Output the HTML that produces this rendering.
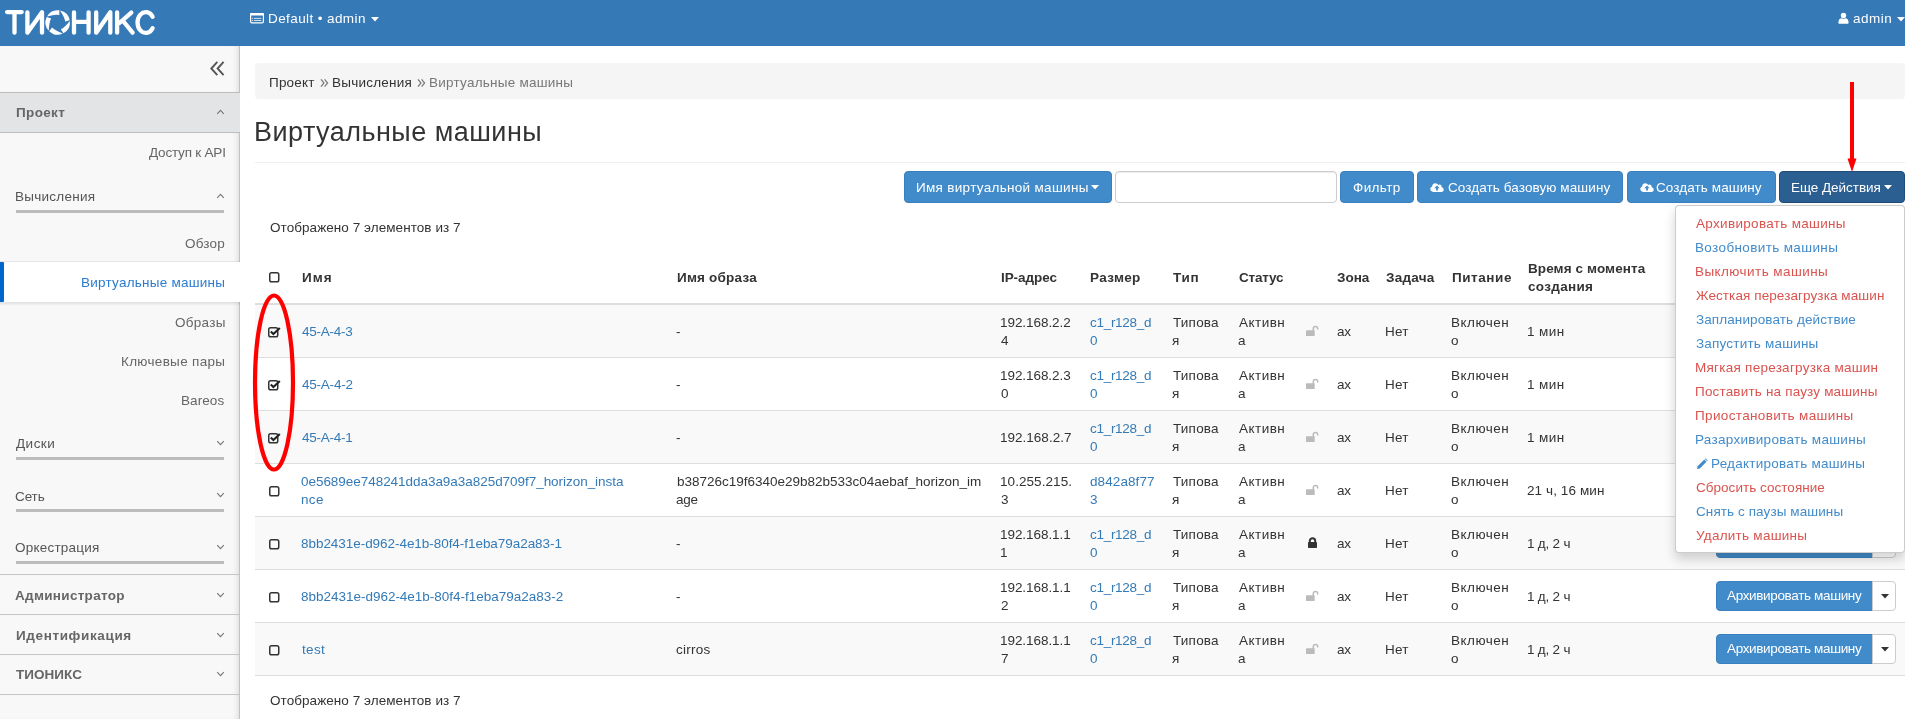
<!DOCTYPE html>
<html><head><meta charset="utf-8"><title>Виртуальные машины</title>
<style>
html,body{margin:0;padding:0;}
body{width:1905px;height:719px;position:relative;overflow:hidden;background:#fff;font-family:"Liberation Sans",sans-serif;}
.t{position:absolute;white-space:nowrap;line-height:20px;will-change:transform;}
.b{position:absolute;}
</style></head><body>
<div class="b" style="left:0px;top:0px;width:1905px;height:46px;background:#3579b7;"></div>
<svg class="b" style="left:0;top:0" width="170" height="46" viewBox="0 0 170 46">
<g fill="none" stroke="#fff" stroke-width="4.3" stroke-linecap="round" stroke-linejoin="round">
<path d="M7.1 12.1H21.7M14.5 12.1V32.7"/>
<path d="M27.4 12.3V32.7L42 12.3V32.7"/>
<path d="M74 12.3V32.7M88.6 12.3V32.7M74 21.9H88.6"/>
<path d="M96.2 12.3V32.7L110.3 12.3V32.7"/>
<path d="M117.1 12.3V32.7M131.3 12.6L119.5 23M123.5 21.5L132.6 32.7"/>
<path d="M152.6 16.8A8.2 10.4 0 1 0 152.6 28.2"/>
</g>
<path fill="#fff" d="M47.03 16.49A12.2 12.2 0 0 1 59.40 10.32L59.28 14.97Q54.97 14.24 47.03 16.49ZM60.03 10.42A12.2 12.2 0 0 1 69.71 20.28L65.26 21.61Q64.61 17.28 60.03 10.42ZM69.81 20.91A12.2 12.2 0 0 1 63.43 33.17L60.79 29.34Q64.70 27.39 69.81 20.91ZM62.86 33.46A12.2 12.2 0 0 1 49.23 31.18L52.05 27.49Q55.11 30.60 62.86 33.46ZM48.78 30.72A12.2 12.2 0 0 1 46.73 17.05L51.12 18.60Q49.10 22.48 48.78 30.72Z"/>
</svg>
<svg class="b" style="left:249px;top:12px" width="16" height="12" viewBox="0 0 16 12">
<rect x="1.6" y="1.6" width="12.8" height="9.2" rx="1.3" fill="none" stroke="#fff" stroke-width="1.2"/>
<rect x="1" y="1" width="14" height="2.6" rx="1" fill="#fff"/>
<path d="M5 6.4H12.3M5 8.5H12.3M3 6.4H4.2M3 8.5H4.2" stroke="#fff" stroke-width="0.9" opacity="0.85"/>
</svg>
<div id="t0" class="t" style="left:268.17px;top:8.7px;font-size:13.5px;color:#fff;font-weight:400;letter-spacing:0.404px;">Default &bull; admin</div>
<svg class="b" style="left:371px;top:17px" width="8" height="5"><path d="M0 0H8L4 4.5Z" fill="#fff"/></svg>
<svg class="b" style="left:1838px;top:12px" width="12" height="13" viewBox="0 0 12 13.6" preserveAspectRatio="none">
<circle cx="5.5" cy="3.6" r="2.7" fill="#fff"/>
<path d="M0.4 11.3C0.4 8.4 1.6 6.9 3.2 6.6C4.4 7.3 6.6 7.3 7.8 6.6C9.4 6.9 10.6 8.4 10.6 11.3C10.6 12 10.2 12.4 9.5 12.4H1.5C0.8 12.4 0.4 12 0.4 11.3Z" fill="#fff"/>
</svg>
<div id="t1" class="t" style="left:1853.31px;top:8.8px;font-size:13.5px;color:#fff;font-weight:400;letter-spacing:0.505px;">admin</div>
<svg class="b" style="left:1897px;top:17px" width="8" height="5"><path d="M0 0H8L4 4.5Z" fill="#fff"/></svg>
<div class="b" style="left:0px;top:46px;width:240px;height:673px;background:#f8f8f8;box-shadow: inset -6px 0 6px -4px rgba(0,0,0,0.13)"></div>
<div class="b" style="left:239px;top:46px;width:1px;height:673px;background:#c2c2c2;"></div>
<svg class="b" style="left:209px;top:60px" width="17" height="17" viewBox="0 0 17 17">
<path d="M8.3 1.8L2.3 8.5L8.3 15.2M14.6 1.8L8.6 8.5L14.6 15.2" fill="none" stroke="#555" stroke-width="1.9"/>
</svg>
<div class="b" style="left:0px;top:92px;width:240px;height:1px;background:#bdbdbd;"></div>
<div class="b" style="left:0px;top:93px;width:240px;height:39px;background:#e3e4e6;"></div>
<div class="b" style="left:0px;top:132px;width:240px;height:1px;background:#bdbdbd;"></div>
<div id="t2" class="t" style="left:15.53px;top:103px;font-size:13.5px;color:#666;font-weight:700;letter-spacing:0.355px;">Проект</div>
<svg class="b" style="left:216px;top:109px" width="9" height="6" viewBox="0 0 9 6"><path d="M1.2 4.8L4.5 1.4L7.8 4.8" fill="none" stroke="#777" stroke-width="1.15"/></svg>
<div id="t3" class="t" style="left:148.59px;top:143px;font-size:13.5px;color:#666;font-weight:400;letter-spacing:-0.200px;">Доступ к API</div>
<div id="t4" class="t" style="left:14.87px;top:187.4px;font-size:13.5px;color:#555;font-weight:400;letter-spacing:0.264px;">Вычисления</div>
<svg class="b" style="left:216px;top:193px" width="9" height="6" viewBox="0 0 9 6"><path d="M1.2 4.8L4.5 1.4L7.8 4.8" fill="none" stroke="#777" stroke-width="1.15"/></svg>
<div class="b" style="left:16px;top:210px;width:208px;height:3px;background:#bcbcbc;"></div>
<div id="t5" class="t" style="left:185.35px;top:234px;font-size:13.5px;color:#666;font-weight:400;letter-spacing:0.204px;">Обзор</div>
<div class="b" style="left:0px;top:261px;width:240px;height:1px;background:rgba(0,0,0,0.07);"></div>
<div class="b" style="left:0px;top:302px;width:240px;height:4px;background:linear-gradient(rgba(0,0,0,0.10),rgba(0,0,0,0));"></div>
<div class="b" style="left:0px;top:262px;width:240px;height:40px;background:#fff;"></div>
<div class="b" style="left:0px;top:262px;width:4px;height:40px;background:#0066cc;border-radius:0 1px 1px 0"></div>
<div id="t6" class="t" style="left:80.69px;top:273px;font-size:13.5px;color:#2c7bcf;font-weight:400;letter-spacing:0.241px;">Виртуальные машины</div>
<div id="t7" class="t" style="left:174.79px;top:313px;font-size:13.5px;color:#666;font-weight:400;letter-spacing:0.283px;">Образы</div>
<div id="t8" class="t" style="left:120.69px;top:352px;font-size:13.5px;color:#666;font-weight:400;letter-spacing:0.307px;">Ключевые пары</div>
<div id="t9" class="t" style="left:181.23px;top:391px;font-size:13.5px;color:#666;font-weight:400;letter-spacing:0.083px;">Bareos</div>
<div id="t10" class="t" style="left:15.90px;top:434px;font-size:13.5px;color:#555;font-weight:400;letter-spacing:0.480px;">Диски</div>
<svg class="b" style="left:216px;top:440px" width="9" height="6" viewBox="0 0 9 6"><path d="M1.2 1.2L4.5 4.6L7.8 1.2" fill="none" stroke="#777" stroke-width="1.15"/></svg>
<div class="b" style="left:16px;top:457px;width:208px;height:3px;background:#bcbcbc;"></div>
<div id="t11" class="t" style="left:15.15px;top:486.5px;font-size:13.5px;color:#555;font-weight:400;letter-spacing:-0.121px;">Сеть</div>
<svg class="b" style="left:216px;top:492px" width="9" height="6" viewBox="0 0 9 6"><path d="M1.2 1.2L4.5 4.6L7.8 1.2" fill="none" stroke="#777" stroke-width="1.15"/></svg>
<div class="b" style="left:16px;top:509px;width:208px;height:3px;background:#bcbcbc;"></div>
<div id="t12" class="t" style="left:15.20px;top:538px;font-size:13.5px;color:#555;font-weight:400;letter-spacing:0.215px;">Оркестрация</div>
<svg class="b" style="left:216px;top:544px" width="9" height="6" viewBox="0 0 9 6"><path d="M1.2 1.2L4.5 4.6L7.8 1.2" fill="none" stroke="#777" stroke-width="1.15"/></svg>
<div class="b" style="left:16px;top:561px;width:208px;height:3px;background:#bcbcbc;"></div>
<div class="b" style="left:0px;top:574px;width:240px;height:1px;background:#c4c4c4;"></div>
<div id="t13" class="t" style="left:15.39px;top:586px;font-size:13.5px;color:#666;font-weight:700;letter-spacing:0.305px;">Администратор</div>
<svg class="b" style="left:216px;top:592px" width="9" height="6" viewBox="0 0 9 6"><path d="M1.2 1.2L4.5 4.6L7.8 1.2" fill="none" stroke="#777" stroke-width="1.15"/></svg>
<div class="b" style="left:0px;top:614px;width:240px;height:1px;background:#c4c4c4;"></div>
<div id="t14" class="t" style="left:15.55px;top:626px;font-size:13.5px;color:#666;font-weight:700;letter-spacing:0.624px;">Идентификация</div>
<svg class="b" style="left:216px;top:632px" width="9" height="6" viewBox="0 0 9 6"><path d="M1.2 1.2L4.5 4.6L7.8 1.2" fill="none" stroke="#777" stroke-width="1.15"/></svg>
<div class="b" style="left:0px;top:654px;width:240px;height:1px;background:#c4c4c4;"></div>
<div id="t15" class="t" style="left:15.84px;top:665px;font-size:13.5px;color:#666;font-weight:700;letter-spacing:0.035px;">ТИОНИКС</div>
<svg class="b" style="left:216px;top:671px" width="9" height="6" viewBox="0 0 9 6"><path d="M1.2 1.2L4.5 4.6L7.8 1.2" fill="none" stroke="#777" stroke-width="1.15"/></svg>
<div class="b" style="left:0px;top:694px;width:240px;height:1px;background:#c4c4c4;"></div>
<div class="b" style="left:255px;top:63px;width:1650px;height:36px;background:#f5f5f5;border-radius:4px"></div>
<div id="t16" class="t" style="left:269.39px;top:73px;font-size:13.5px;color:#333;font-weight:400;letter-spacing:0.199px;">Проект</div>
<svg class="b" style="left:320px;top:78px" width="9" height="10" viewBox="0 0 9 10"><path d="M1 1.3L4 5L1 8.7M4.6 1.3L7.6 5L4.6 8.7" fill="none" stroke="#777" stroke-width="1.2"/></svg>
<div id="t17" class="t" style="left:332.38px;top:73px;font-size:13.5px;color:#333;font-weight:400;letter-spacing:0.239px;">Вычисления</div>
<svg class="b" style="left:416.5px;top:78px" width="9" height="10" viewBox="0 0 9 10"><path d="M1 1.3L4 5L1 8.7M4.6 1.3L7.6 5L4.6 8.7" fill="none" stroke="#777" stroke-width="1.2"/></svg>
<div id="t18" class="t" style="left:428.89px;top:73px;font-size:13.5px;color:#777;font-weight:400;letter-spacing:0.241px;">Виртуальные машины</div>
<div id="t19" class="t" style="left:254.29px;top:122.19999999999999px;font-size:27px;color:#333;font-weight:400;letter-spacing:0.469px;">Виртуальные машины</div>
<div class="b" style="left:255px;top:162px;width:1650px;height:1px;background:#eee;"></div>
<div class="b" style="left:904px;top:171px;width:208px;height:32px;background:#428bca;border-radius:4px;box-sizing:border-box;border:1px solid #3a7fbd"></div>
<div id="t20" class="t" style="left:915.89px;top:178.3px;font-size:13.5px;color:#fff;font-weight:400;letter-spacing:0.308px;">Имя виртуальной машины</div>
<svg class="b" style="left:1091px;top:185px" width="8" height="5"><path d="M0 0H8L4 4.5Z" fill="#fff"/></svg>
<div class="b" style="left:1115px;top:171px;width:222px;height:32px;background:#fff;border-radius:4px;box-sizing:border-box;border:1px solid #ccc;box-shadow:inset 0 1px 1px rgba(0,0,0,.075)"></div>
<div class="b" style="left:1340px;top:171px;width:74px;height:32px;background:#428bca;border-radius:4px;box-sizing:border-box;border:1px solid #3a7fbd"></div>
<div id="t21" class="t" style="left:1353.08px;top:178.3px;font-size:13.5px;color:#fff;font-weight:400;letter-spacing:0.368px;">Фильтр</div>
<div class="b" style="left:1417px;top:171px;width:206px;height:32px;background:#428bca;border-radius:4px;box-sizing:border-box;border:1px solid #3a7fbd"></div>
<svg class="b" style="left:1430.2px;top:181.6px" width="14" height="10.3" viewBox="0 0 15 11">
<path d="M3.4 10.6C1.6 10.6 0.3 9.3 0.3 7.6C0.3 6.2 1.2 5.1 2.4 4.7C2.4 4.6 2.4 4.5 2.4 4.4C2.4 2.6 3.9 1.2 5.7 1.2C7 1.2 8.2 2 8.7 3.1C9.1 2.8 9.6 2.6 10.1 2.6C11.4 2.6 12.4 3.6 12.4 4.9C12.4 5.1 12.4 5.3 12.3 5.4C13.7 5.8 14.7 7 14.7 8.4C14.7 9.6 13.7 10.6 12.4 10.6Z" fill="#fff"/>
<path d="M7.5 3.8L4.6 6.7H6.5V9.2H8.5V6.7H10.4Z" fill="#428bca"/>
</svg>
<div id="t22" class="t" style="left:1447.70px;top:178.3px;font-size:13.5px;color:#fff;font-weight:400;letter-spacing:0.092px;">Создать базовую машину</div>
<div class="b" style="left:1627px;top:171px;width:149px;height:32px;background:#428bca;border-radius:4px;box-sizing:border-box;border:1px solid #3a7fbd"></div>
<svg class="b" style="left:1639.5px;top:181.6px" width="14" height="10.3" viewBox="0 0 15 11">
<path d="M3.4 10.6C1.6 10.6 0.3 9.3 0.3 7.6C0.3 6.2 1.2 5.1 2.4 4.7C2.4 4.6 2.4 4.5 2.4 4.4C2.4 2.6 3.9 1.2 5.7 1.2C7 1.2 8.2 2 8.7 3.1C9.1 2.8 9.6 2.6 10.1 2.6C11.4 2.6 12.4 3.6 12.4 4.9C12.4 5.1 12.4 5.3 12.3 5.4C13.7 5.8 14.7 7 14.7 8.4C14.7 9.6 13.7 10.6 12.4 10.6Z" fill="#fff"/>
<path d="M7.5 3.8L4.6 6.7H6.5V9.2H8.5V6.7H10.4Z" fill="#428bca"/>
</svg>
<div id="t23" class="t" style="left:1656.20px;top:178.3px;font-size:13.5px;color:#fff;font-weight:400;letter-spacing:0.090px;">Создать машину</div>
<div class="b" style="left:1779px;top:171px;width:126px;height:32px;background:#2b5f91;border-radius:4px;box-sizing:border-box;border:1px solid #204d79"></div>
<div id="t24" class="t" style="left:1790.89px;top:178.3px;font-size:13.5px;color:#fff;font-weight:400;letter-spacing:-0.050px;">Еще Действия</div>
<svg class="b" style="left:1884px;top:185px" width="8" height="5"><path d="M0 0H8L4 4.5Z" fill="#fff"/></svg>
<div id="t25" class="t" style="left:269.70px;top:217.7px;font-size:13.5px;color:#333;font-weight:400;letter-spacing:0.061px;">Отображено 7 элементов из 7</div>
<svg class="b" style="left:268px;top:271px" width="13" height="13" viewBox="0 0 13 13">
<rect x="1.75" y="1.75" width="9" height="9" rx="1.8" fill="none" stroke="#333" stroke-width="1.5"/>
</svg>
<div id="t26" class="t" style="left:301.99px;top:268px;font-size:13.5px;color:#333;font-weight:700;letter-spacing:1.068px;">Имя</div>
<div id="t27" class="t" style="left:676.60px;top:268px;font-size:13.5px;color:#333;font-weight:700;letter-spacing:0.198px;">Имя образа</div>
<div id="t28" class="t" style="left:1000.80px;top:268px;font-size:13.5px;color:#333;font-weight:700;letter-spacing:-0.073px;">IP-адрес</div>
<div id="t29" class="t" style="left:1089.86px;top:268px;font-size:13.5px;color:#333;font-weight:700;letter-spacing:0.334px;">Размер</div>
<div id="t30" class="t" style="left:1173.10px;top:268px;font-size:13.5px;color:#333;font-weight:700;letter-spacing:0.675px;">Тип</div>
<div id="t31" class="t" style="left:1238.80px;top:268px;font-size:13.5px;color:#333;font-weight:700;letter-spacing:-0.186px;">Статус</div>
<div id="t32" class="t" style="left:1336.89px;top:268px;font-size:13.5px;color:#333;font-weight:700;letter-spacing:-0.036px;">Зона</div>
<div id="t33" class="t" style="left:1385.84px;top:268px;font-size:13.5px;color:#333;font-weight:700;letter-spacing:0.253px;">Задача</div>
<div id="t34" class="t" style="left:1451.86px;top:268px;font-size:13.5px;color:#333;font-weight:700;letter-spacing:0.559px;">Питание</div>
<div id="t35" class="t" style="left:1527.80px;top:259px;font-size:13.5px;color:#333;font-weight:700;letter-spacing:0.098px;">Время с момента</div>
<div id="t36" class="t" style="left:1528.20px;top:277px;font-size:13.5px;color:#333;font-weight:700;letter-spacing:0.325px;">создания</div>
<div class="b" style="left:255px;top:303px;width:1650px;height:2px;background:#ddd;"></div>
<div class="b" style="left:255px;top:305px;width:1650px;height:52px;background:#f9f9f9;"></div>
<div class="b" style="left:255px;top:357px;width:1650px;height:1px;background:#ddd;"></div>
<svg class="b" style="left:267.3px;top:325.8px" width="15" height="13" viewBox="0 0 15 13">
<rect x="1.75" y="1.75" width="9" height="9" rx="1.8" fill="none" stroke="#333" stroke-width="1.5"/>
<path d="M3.8 5.4L6.4 8L12.8 1.9" fill="none" stroke="#222" stroke-width="2.1"/>
</svg>
<div id="t37" class="t" style="left:301.65px;top:322px;font-size:13.5px;color:#337ab7;font-weight:400;letter-spacing:-0.238px;">45-A-4-3</div>
<div id="t38" class="t" style="left:676.30px;top:322px;font-size:13.5px;color:#333;font-weight:400;letter-spacing:0.053px;">-</div>
<div id="t39" class="t" style="left:1000.47px;top:313px;font-size:13.5px;color:#333;font-weight:400;letter-spacing:-0.058px;">192.168.2.2</div>
<div id="t40" class="t" style="left:1001.13px;top:331px;font-size:13.5px;color:#333;font-weight:400;letter-spacing:0.053px;">4</div>
<div id="t41" class="t" style="left:1089.80px;top:313px;font-size:13.5px;color:#337ab7;font-weight:400;letter-spacing:-0.287px;">c1_r128_d</div>
<div id="t42" class="t" style="left:1089.87px;top:331px;font-size:13.5px;color:#337ab7;font-weight:400;letter-spacing:0.053px;">0</div>
<div id="t43" class="t" style="left:1172.65px;top:313px;font-size:13.5px;color:#333;font-weight:400;letter-spacing:0.212px;">Типова</div>
<div id="t44" class="t" style="left:1172.46px;top:331px;font-size:13.5px;color:#333;font-weight:400;letter-spacing:0.053px;">я</div>
<div id="t45" class="t" style="left:1238.72px;top:313px;font-size:13.5px;color:#333;font-weight:400;letter-spacing:0.477px;">Активн</div>
<div id="t46" class="t" style="left:1238.25px;top:331px;font-size:13.5px;color:#333;font-weight:400;letter-spacing:0.053px;">а</div>
<svg class="b" style="left:1305px;top:325px" width="14" height="12" viewBox="0 0 14 12">
<path d="M8.3 6V3.8C8.3 2.5 9.3 1.6 10.5 1.6C11.7 1.6 12.7 2.5 12.7 3.8V4.6" fill="none" stroke="#bbb" stroke-width="1.5"/>
<rect x="1" y="5.3" width="8.7" height="5.8" rx="0.6" fill="#bbb"/>
</svg>
<div id="t47" class="t" style="left:1336.91px;top:322px;font-size:13.5px;color:#333;font-weight:400;letter-spacing:-0.227px;">ax</div>
<div id="t48" class="t" style="left:1384.87px;top:322px;font-size:13.5px;color:#333;font-weight:400;letter-spacing:0.197px;">Нет</div>
<div id="t49" class="t" style="left:1450.87px;top:313px;font-size:13.5px;color:#333;font-weight:400;letter-spacing:0.492px;">Включен</div>
<div id="t50" class="t" style="left:1451.32px;top:331px;font-size:13.5px;color:#333;font-weight:400;letter-spacing:0.053px;">о</div>
<div id="t51" class="t" style="left:1526.97px;top:322px;font-size:13.5px;color:#333;font-weight:400;letter-spacing:0.395px;">1 мин</div>
<div class="b" style="left:255px;top:410px;width:1650px;height:1px;background:#ddd;"></div>
<svg class="b" style="left:267.3px;top:378.8px" width="15" height="13" viewBox="0 0 15 13">
<rect x="1.75" y="1.75" width="9" height="9" rx="1.8" fill="none" stroke="#333" stroke-width="1.5"/>
<path d="M3.8 5.4L6.4 8L12.8 1.9" fill="none" stroke="#222" stroke-width="2.1"/>
</svg>
<div id="t52" class="t" style="left:301.65px;top:375px;font-size:13.5px;color:#337ab7;font-weight:400;letter-spacing:-0.224px;">45-A-4-2</div>
<div id="t53" class="t" style="left:676.30px;top:375px;font-size:13.5px;color:#333;font-weight:400;letter-spacing:0.053px;">-</div>
<div id="t54" class="t" style="left:1000.47px;top:366px;font-size:13.5px;color:#333;font-weight:400;letter-spacing:-0.062px;">192.168.2.3</div>
<div id="t55" class="t" style="left:1000.86px;top:384px;font-size:13.5px;color:#333;font-weight:400;letter-spacing:0.053px;">0</div>
<div id="t56" class="t" style="left:1089.80px;top:366px;font-size:13.5px;color:#337ab7;font-weight:400;letter-spacing:-0.287px;">c1_r128_d</div>
<div id="t57" class="t" style="left:1089.88px;top:384px;font-size:13.5px;color:#337ab7;font-weight:400;letter-spacing:0.053px;">0</div>
<div id="t58" class="t" style="left:1172.65px;top:366px;font-size:13.5px;color:#333;font-weight:400;letter-spacing:0.213px;">Типова</div>
<div id="t59" class="t" style="left:1172.46px;top:384px;font-size:13.5px;color:#333;font-weight:400;letter-spacing:0.053px;">я</div>
<div id="t60" class="t" style="left:1238.72px;top:366px;font-size:13.5px;color:#333;font-weight:400;letter-spacing:0.477px;">Активн</div>
<div id="t61" class="t" style="left:1238.25px;top:384px;font-size:13.5px;color:#333;font-weight:400;letter-spacing:0.053px;">а</div>
<svg class="b" style="left:1305px;top:378px" width="14" height="12" viewBox="0 0 14 12">
<path d="M8.3 6V3.8C8.3 2.5 9.3 1.6 10.5 1.6C11.7 1.6 12.7 2.5 12.7 3.8V4.6" fill="none" stroke="#bbb" stroke-width="1.5"/>
<rect x="1" y="5.3" width="8.7" height="5.8" rx="0.6" fill="#bbb"/>
</svg>
<div id="t62" class="t" style="left:1336.91px;top:375px;font-size:13.5px;color:#333;font-weight:400;letter-spacing:-0.223px;">ax</div>
<div id="t63" class="t" style="left:1384.88px;top:375px;font-size:13.5px;color:#333;font-weight:400;letter-spacing:0.194px;">Нет</div>
<div id="t64" class="t" style="left:1450.88px;top:366px;font-size:13.5px;color:#333;font-weight:400;letter-spacing:0.491px;">Включен</div>
<div id="t65" class="t" style="left:1451.31px;top:384px;font-size:13.5px;color:#333;font-weight:400;letter-spacing:0.053px;">о</div>
<div id="t66" class="t" style="left:1526.97px;top:375px;font-size:13.5px;color:#333;font-weight:400;letter-spacing:0.395px;">1 мин</div>
<div class="b" style="left:255px;top:411px;width:1650px;height:52px;background:#f9f9f9;"></div>
<div class="b" style="left:255px;top:463px;width:1650px;height:1px;background:#ddd;"></div>
<svg class="b" style="left:267.3px;top:431.8px" width="15" height="13" viewBox="0 0 15 13">
<rect x="1.75" y="1.75" width="9" height="9" rx="1.8" fill="none" stroke="#333" stroke-width="1.5"/>
<path d="M3.8 5.4L6.4 8L12.8 1.9" fill="none" stroke="#222" stroke-width="2.1"/>
</svg>
<div id="t67" class="t" style="left:301.65px;top:428px;font-size:13.5px;color:#337ab7;font-weight:400;letter-spacing:-0.236px;">45-A-4-1</div>
<div id="t68" class="t" style="left:676.30px;top:428px;font-size:13.5px;color:#333;font-weight:400;letter-spacing:0.053px;">-</div>
<div id="t69" class="t" style="left:1000.47px;top:428px;font-size:13.5px;color:#333;font-weight:400;letter-spacing:0.013px;">192.168.2.7</div>
<div id="t70" class="t" style="left:1089.80px;top:419px;font-size:13.5px;color:#337ab7;font-weight:400;letter-spacing:-0.287px;">c1_r128_d</div>
<div id="t71" class="t" style="left:1089.87px;top:437px;font-size:13.5px;color:#337ab7;font-weight:400;letter-spacing:0.053px;">0</div>
<div id="t72" class="t" style="left:1172.65px;top:419px;font-size:13.5px;color:#333;font-weight:400;letter-spacing:0.212px;">Типова</div>
<div id="t73" class="t" style="left:1172.46px;top:437px;font-size:13.5px;color:#333;font-weight:400;letter-spacing:0.053px;">я</div>
<div id="t74" class="t" style="left:1238.72px;top:419px;font-size:13.5px;color:#333;font-weight:400;letter-spacing:0.477px;">Активн</div>
<div id="t75" class="t" style="left:1238.25px;top:437px;font-size:13.5px;color:#333;font-weight:400;letter-spacing:0.053px;">а</div>
<svg class="b" style="left:1305px;top:431px" width="14" height="12" viewBox="0 0 14 12">
<path d="M8.3 6V3.8C8.3 2.5 9.3 1.6 10.5 1.6C11.7 1.6 12.7 2.5 12.7 3.8V4.6" fill="none" stroke="#bbb" stroke-width="1.5"/>
<rect x="1" y="5.3" width="8.7" height="5.8" rx="0.6" fill="#bbb"/>
</svg>
<div id="t76" class="t" style="left:1336.91px;top:428px;font-size:13.5px;color:#333;font-weight:400;letter-spacing:-0.227px;">ax</div>
<div id="t77" class="t" style="left:1384.87px;top:428px;font-size:13.5px;color:#333;font-weight:400;letter-spacing:0.197px;">Нет</div>
<div id="t78" class="t" style="left:1450.87px;top:419px;font-size:13.5px;color:#333;font-weight:400;letter-spacing:0.492px;">Включен</div>
<div id="t79" class="t" style="left:1451.32px;top:437px;font-size:13.5px;color:#333;font-weight:400;letter-spacing:0.053px;">о</div>
<div id="t80" class="t" style="left:1526.97px;top:428px;font-size:13.5px;color:#333;font-weight:400;letter-spacing:0.395px;">1 мин</div>
<div class="b" style="left:255px;top:516px;width:1650px;height:1px;background:#ddd;"></div>
<svg class="b" style="left:268.4px;top:485px" width="13" height="13" viewBox="0 0 13 13">
<rect x="1.75" y="1.75" width="9" height="9" rx="1.8" fill="none" stroke="#333" stroke-width="1.5"/>
</svg>
<div id="t81" class="t" style="left:301.36px;top:472px;font-size:13.5px;color:#337ab7;font-weight:400;letter-spacing:-0.041px;">0e5689ee748241dda3a9a3a825d709f7_horizon_insta</div>
<div id="t82" class="t" style="left:301.40px;top:490px;font-size:13.5px;color:#337ab7;font-weight:400;letter-spacing:0.316px;">nce</div>
<div id="t83" class="t" style="left:676.53px;top:472px;font-size:13.5px;color:#333;font-weight:400;letter-spacing:-0.010px;">b38726c19f6340e29b82b533c04aebaf_horizon_im</div>
<div id="t84" class="t" style="left:676.25px;top:490px;font-size:13.5px;color:#333;font-weight:400;letter-spacing:-0.274px;">age</div>
<div id="t85" class="t" style="left:1000.47px;top:472px;font-size:13.5px;color:#333;font-weight:400;letter-spacing:0.067px;">10.255.215.</div>
<div id="t86" class="t" style="left:1000.56px;top:490px;font-size:13.5px;color:#333;font-weight:400;letter-spacing:0.053px;">3</div>
<div id="t87" class="t" style="left:1089.82px;top:472px;font-size:13.5px;color:#337ab7;font-weight:400;letter-spacing:0.086px;">d842a8f77</div>
<div id="t88" class="t" style="left:1089.57px;top:490px;font-size:13.5px;color:#337ab7;font-weight:400;letter-spacing:0.053px;">3</div>
<div id="t89" class="t" style="left:1172.65px;top:472px;font-size:13.5px;color:#333;font-weight:400;letter-spacing:0.213px;">Типова</div>
<div id="t90" class="t" style="left:1172.46px;top:490px;font-size:13.5px;color:#333;font-weight:400;letter-spacing:0.053px;">я</div>
<div id="t91" class="t" style="left:1238.72px;top:472px;font-size:13.5px;color:#333;font-weight:400;letter-spacing:0.477px;">Активн</div>
<div id="t92" class="t" style="left:1238.25px;top:490px;font-size:13.5px;color:#333;font-weight:400;letter-spacing:0.053px;">а</div>
<svg class="b" style="left:1305px;top:484px" width="14" height="12" viewBox="0 0 14 12">
<path d="M8.3 6V3.8C8.3 2.5 9.3 1.6 10.5 1.6C11.7 1.6 12.7 2.5 12.7 3.8V4.6" fill="none" stroke="#bbb" stroke-width="1.5"/>
<rect x="1" y="5.3" width="8.7" height="5.8" rx="0.6" fill="#bbb"/>
</svg>
<div id="t93" class="t" style="left:1336.91px;top:481px;font-size:13.5px;color:#333;font-weight:400;letter-spacing:-0.223px;">ax</div>
<div id="t94" class="t" style="left:1384.88px;top:481px;font-size:13.5px;color:#333;font-weight:400;letter-spacing:0.194px;">Нет</div>
<div id="t95" class="t" style="left:1450.88px;top:472px;font-size:13.5px;color:#333;font-weight:400;letter-spacing:0.491px;">Включен</div>
<div id="t96" class="t" style="left:1451.31px;top:490px;font-size:13.5px;color:#333;font-weight:400;letter-spacing:0.053px;">о</div>
<div id="t97" class="t" style="left:1527.19px;top:481px;font-size:13.5px;color:#333;font-weight:400;letter-spacing:0.090px;">21 ч, 16 мин</div>
<div class="b" style="left:255px;top:517px;width:1650px;height:52px;background:#f9f9f9;"></div>
<div class="b" style="left:255px;top:569px;width:1650px;height:1px;background:#ddd;"></div>
<svg class="b" style="left:268.4px;top:538px" width="13" height="13" viewBox="0 0 13 13">
<rect x="1.75" y="1.75" width="9" height="9" rx="1.8" fill="none" stroke="#333" stroke-width="1.5"/>
</svg>
<div id="t98" class="t" style="left:301.25px;top:534px;font-size:13.5px;color:#337ab7;font-weight:400;letter-spacing:-0.047px;">8bb2431e-d962-4e1b-80f4-f1eba79a2a83-1</div>
<div id="t99" class="t" style="left:676.30px;top:534px;font-size:13.5px;color:#333;font-weight:400;letter-spacing:0.053px;">-</div>
<div id="t100" class="t" style="left:1000.47px;top:525px;font-size:13.5px;color:#333;font-weight:400;letter-spacing:-0.060px;">192.168.1.1</div>
<div id="t101" class="t" style="left:1000.47px;top:543px;font-size:13.5px;color:#333;font-weight:400;letter-spacing:0.053px;">1</div>
<div id="t102" class="t" style="left:1089.80px;top:525px;font-size:13.5px;color:#337ab7;font-weight:400;letter-spacing:-0.287px;">c1_r128_d</div>
<div id="t103" class="t" style="left:1089.87px;top:543px;font-size:13.5px;color:#337ab7;font-weight:400;letter-spacing:0.053px;">0</div>
<div id="t104" class="t" style="left:1172.65px;top:525px;font-size:13.5px;color:#333;font-weight:400;letter-spacing:0.212px;">Типова</div>
<div id="t105" class="t" style="left:1172.46px;top:543px;font-size:13.5px;color:#333;font-weight:400;letter-spacing:0.053px;">я</div>
<div id="t106" class="t" style="left:1238.72px;top:525px;font-size:13.5px;color:#333;font-weight:400;letter-spacing:0.477px;">Активн</div>
<div id="t107" class="t" style="left:1238.25px;top:543px;font-size:13.5px;color:#333;font-weight:400;letter-spacing:0.053px;">а</div>
<svg class="b" style="left:1307px;top:537px" width="11" height="12" viewBox="0 0 11 12">
<path d="M2.8 5.2V3.9C2.8 2.3 4 1.2 5.5 1.2C7 1.2 8.2 2.3 8.2 3.9V5.2" fill="none" stroke="#333" stroke-width="2"/>
<rect x="1" y="5" width="9" height="6" rx="0.8" fill="#333"/>
</svg>
<div id="t108" class="t" style="left:1336.91px;top:534px;font-size:13.5px;color:#333;font-weight:400;letter-spacing:-0.227px;">ax</div>
<div id="t109" class="t" style="left:1384.87px;top:534px;font-size:13.5px;color:#333;font-weight:400;letter-spacing:0.197px;">Нет</div>
<div id="t110" class="t" style="left:1450.87px;top:525px;font-size:13.5px;color:#333;font-weight:400;letter-spacing:0.492px;">Включен</div>
<div id="t111" class="t" style="left:1451.32px;top:543px;font-size:13.5px;color:#333;font-weight:400;letter-spacing:0.053px;">о</div>
<div id="t112" class="t" style="left:1526.97px;top:534px;font-size:13.5px;color:#333;font-weight:400;letter-spacing:-0.217px;">1 д, 2 ч</div>
<div class="b" style="left:1716px;top:528px;width:157px;height:30px;background:#428bca;border-radius:4px 0 0 4px;box-sizing:border-box;border:1px solid #3a7fbd"></div>
<div id="t113" class="t" style="left:1727.70px;top:533px;font-size:13.5px;color:#fff;font-weight:400;letter-spacing:-0.378px;">Архивировать машину</div>
<div class="b" style="left:1872px;top:528px;width:24px;height:30px;background:#fff;border-radius:0 4px 4px 0;box-sizing:border-box;border:1px solid #ccc"></div>
<svg class="b" style="left:1880.5px;top:541px" width="8" height="5"><path d="M0 0H8L4 4.5Z" fill="#333"/></svg>
<div class="b" style="left:255px;top:622px;width:1650px;height:1px;background:#ddd;"></div>
<svg class="b" style="left:268.4px;top:591px" width="13" height="13" viewBox="0 0 13 13">
<rect x="1.75" y="1.75" width="9" height="9" rx="1.8" fill="none" stroke="#333" stroke-width="1.5"/>
</svg>
<div id="t114" class="t" style="left:301.25px;top:587px;font-size:13.5px;color:#337ab7;font-weight:400;letter-spacing:-0.016px;">8bb2431e-d962-4e1b-80f4-f1eba79a2a83-2</div>
<div id="t115" class="t" style="left:676.30px;top:587px;font-size:13.5px;color:#333;font-weight:400;letter-spacing:0.053px;">-</div>
<div id="t116" class="t" style="left:1000.47px;top:578px;font-size:13.5px;color:#333;font-weight:400;letter-spacing:-0.060px;">192.168.1.1</div>
<div id="t117" class="t" style="left:1000.69px;top:596px;font-size:13.5px;color:#333;font-weight:400;letter-spacing:0.053px;">2</div>
<div id="t118" class="t" style="left:1089.80px;top:578px;font-size:13.5px;color:#337ab7;font-weight:400;letter-spacing:-0.287px;">c1_r128_d</div>
<div id="t119" class="t" style="left:1089.88px;top:596px;font-size:13.5px;color:#337ab7;font-weight:400;letter-spacing:0.053px;">0</div>
<div id="t120" class="t" style="left:1172.65px;top:578px;font-size:13.5px;color:#333;font-weight:400;letter-spacing:0.213px;">Типова</div>
<div id="t121" class="t" style="left:1172.46px;top:596px;font-size:13.5px;color:#333;font-weight:400;letter-spacing:0.053px;">я</div>
<div id="t122" class="t" style="left:1238.72px;top:578px;font-size:13.5px;color:#333;font-weight:400;letter-spacing:0.477px;">Активн</div>
<div id="t123" class="t" style="left:1238.25px;top:596px;font-size:13.5px;color:#333;font-weight:400;letter-spacing:0.053px;">а</div>
<svg class="b" style="left:1305px;top:590px" width="14" height="12" viewBox="0 0 14 12">
<path d="M8.3 6V3.8C8.3 2.5 9.3 1.6 10.5 1.6C11.7 1.6 12.7 2.5 12.7 3.8V4.6" fill="none" stroke="#bbb" stroke-width="1.5"/>
<rect x="1" y="5.3" width="8.7" height="5.8" rx="0.6" fill="#bbb"/>
</svg>
<div id="t124" class="t" style="left:1336.91px;top:587px;font-size:13.5px;color:#333;font-weight:400;letter-spacing:-0.223px;">ax</div>
<div id="t125" class="t" style="left:1384.88px;top:587px;font-size:13.5px;color:#333;font-weight:400;letter-spacing:0.194px;">Нет</div>
<div id="t126" class="t" style="left:1450.88px;top:578px;font-size:13.5px;color:#333;font-weight:400;letter-spacing:0.491px;">Включен</div>
<div id="t127" class="t" style="left:1451.31px;top:596px;font-size:13.5px;color:#333;font-weight:400;letter-spacing:0.053px;">о</div>
<div id="t128" class="t" style="left:1526.97px;top:587px;font-size:13.5px;color:#333;font-weight:400;letter-spacing:-0.217px;">1 д, 2 ч</div>
<div class="b" style="left:1716px;top:581px;width:157px;height:30px;background:#428bca;border-radius:4px 0 0 4px;box-sizing:border-box;border:1px solid #3a7fbd"></div>
<div id="t129" class="t" style="left:1726.75px;top:586px;font-size:13.5px;color:#fff;font-weight:400;letter-spacing:-0.348px;">Архивировать машину</div>
<div class="b" style="left:1872px;top:581px;width:24px;height:30px;background:#fff;border-radius:0 4px 4px 0;box-sizing:border-box;border:1px solid #ccc"></div>
<svg class="b" style="left:1880.5px;top:594px" width="8" height="5"><path d="M0 0H8L4 4.5Z" fill="#333"/></svg>
<div class="b" style="left:255px;top:623px;width:1650px;height:52px;background:#f9f9f9;"></div>
<div class="b" style="left:255px;top:675px;width:1650px;height:1px;background:#ddd;"></div>
<svg class="b" style="left:268.4px;top:644px" width="13" height="13" viewBox="0 0 13 13">
<rect x="1.75" y="1.75" width="9" height="9" rx="1.8" fill="none" stroke="#333" stroke-width="1.5"/>
</svg>
<div id="t130" class="t" style="left:301.55px;top:640px;font-size:13.5px;color:#337ab7;font-weight:400;letter-spacing:0.347px;">test</div>
<div id="t131" class="t" style="left:676.28px;top:640px;font-size:13.5px;color:#333;font-weight:400;letter-spacing:0.256px;">cirros</div>
<div id="t132" class="t" style="left:1000.47px;top:631px;font-size:13.5px;color:#333;font-weight:400;letter-spacing:-0.060px;">192.168.1.1</div>
<div id="t133" class="t" style="left:1000.69px;top:649px;font-size:13.5px;color:#333;font-weight:400;letter-spacing:0.053px;">7</div>
<div id="t134" class="t" style="left:1089.80px;top:631px;font-size:13.5px;color:#337ab7;font-weight:400;letter-spacing:-0.287px;">c1_r128_d</div>
<div id="t135" class="t" style="left:1089.87px;top:649px;font-size:13.5px;color:#337ab7;font-weight:400;letter-spacing:0.053px;">0</div>
<div id="t136" class="t" style="left:1172.65px;top:631px;font-size:13.5px;color:#333;font-weight:400;letter-spacing:0.212px;">Типова</div>
<div id="t137" class="t" style="left:1172.46px;top:649px;font-size:13.5px;color:#333;font-weight:400;letter-spacing:0.053px;">я</div>
<div id="t138" class="t" style="left:1238.72px;top:631px;font-size:13.5px;color:#333;font-weight:400;letter-spacing:0.477px;">Активн</div>
<div id="t139" class="t" style="left:1238.25px;top:649px;font-size:13.5px;color:#333;font-weight:400;letter-spacing:0.053px;">а</div>
<svg class="b" style="left:1305px;top:643px" width="14" height="12" viewBox="0 0 14 12">
<path d="M8.3 6V3.8C8.3 2.5 9.3 1.6 10.5 1.6C11.7 1.6 12.7 2.5 12.7 3.8V4.6" fill="none" stroke="#bbb" stroke-width="1.5"/>
<rect x="1" y="5.3" width="8.7" height="5.8" rx="0.6" fill="#bbb"/>
</svg>
<div id="t140" class="t" style="left:1336.91px;top:640px;font-size:13.5px;color:#333;font-weight:400;letter-spacing:-0.227px;">ax</div>
<div id="t141" class="t" style="left:1384.87px;top:640px;font-size:13.5px;color:#333;font-weight:400;letter-spacing:0.197px;">Нет</div>
<div id="t142" class="t" style="left:1450.87px;top:631px;font-size:13.5px;color:#333;font-weight:400;letter-spacing:0.492px;">Включен</div>
<div id="t143" class="t" style="left:1451.32px;top:649px;font-size:13.5px;color:#333;font-weight:400;letter-spacing:0.053px;">о</div>
<div id="t144" class="t" style="left:1526.97px;top:640px;font-size:13.5px;color:#333;font-weight:400;letter-spacing:-0.217px;">1 д, 2 ч</div>
<div class="b" style="left:1716px;top:634px;width:157px;height:30px;background:#428bca;border-radius:4px 0 0 4px;box-sizing:border-box;border:1px solid #3a7fbd"></div>
<div id="t145" class="t" style="left:1726.75px;top:639px;font-size:13.5px;color:#fff;font-weight:400;letter-spacing:-0.348px;">Архивировать машину</div>
<div class="b" style="left:1872px;top:634px;width:24px;height:30px;background:#fff;border-radius:0 4px 4px 0;box-sizing:border-box;border:1px solid #ccc"></div>
<svg class="b" style="left:1880.5px;top:647px" width="8" height="5"><path d="M0 0H8L4 4.5Z" fill="#333"/></svg>
<div id="t146" class="t" style="left:270.36px;top:690.9px;font-size:13.5px;color:#333;font-weight:400;letter-spacing:0.061px;">Отображено 7 элементов из 7</div>
<div class="b" style="left:1675px;top:205px;width:230px;height:348px;background:#fff;border:1px solid rgba(0,0,0,.2);border-radius:4px;box-sizing:border-box;box-shadow:0 6px 12px rgba(0,0,0,.175)"></div>
<div id="t147" class="t" style="left:1696.02px;top:214px;font-size:13.5px;color:#d9534f;font-weight:400;letter-spacing:0.315px;">Архивировать машины</div>
<div id="t148" class="t" style="left:1695.17px;top:238px;font-size:13.5px;color:#428bca;font-weight:400;letter-spacing:0.368px;">Возобновить машины</div>
<div id="t149" class="t" style="left:1695.17px;top:262px;font-size:13.5px;color:#d9534f;font-weight:400;letter-spacing:0.430px;">Выключить машины</div>
<div id="t150" class="t" style="left:1696.26px;top:286px;font-size:13.5px;color:#d9534f;font-weight:400;letter-spacing:0.092px;">Жесткая перезагрузка машин</div>
<div id="t151" class="t" style="left:1695.99px;top:310px;font-size:13.5px;color:#428bca;font-weight:400;letter-spacing:0.103px;">Запланировать действие</div>
<div id="t152" class="t" style="left:1695.99px;top:334px;font-size:13.5px;color:#428bca;font-weight:400;letter-spacing:0.195px;">Запустить машины</div>
<div id="t153" class="t" style="left:1695.17px;top:358px;font-size:13.5px;color:#d9534f;font-weight:400;letter-spacing:0.262px;">Мягкая перезагрузка машин</div>
<div id="t154" class="t" style="left:1695.18px;top:382px;font-size:13.5px;color:#d9534f;font-weight:400;letter-spacing:0.174px;">Поставить на паузу машины</div>
<div id="t155" class="t" style="left:1695.18px;top:406px;font-size:13.5px;color:#d9534f;font-weight:400;letter-spacing:0.349px;">Приостановить машины</div>
<div id="t156" class="t" style="left:1695.17px;top:430px;font-size:13.5px;color:#428bca;font-weight:400;letter-spacing:0.292px;">Разархивировать машины</div>
<svg class="b" style="left:1696px;top:458px" width="12" height="12" viewBox="0 0 12 12">
<path d="M1 11L1.6 8.2L8.3 1.5L10.5 3.7L3.8 10.4Z" fill="#428bca"/><path d="M8.9 0.9L9.6 0.2L11.8 2.4L11.1 3.1Z" fill="#428bca"/>
</svg>
<div id="t157" class="t" style="left:1710.55px;top:454px;font-size:13.5px;color:#428bca;font-weight:400;letter-spacing:0.243px;">Редактировать машины</div>
<div id="t158" class="t" style="left:1696.03px;top:478px;font-size:13.5px;color:#d9534f;font-weight:400;letter-spacing:0.030px;">Сбросить состояние</div>
<div id="t159" class="t" style="left:1696.04px;top:502px;font-size:13.5px;color:#428bca;font-weight:400;letter-spacing:0.091px;">Снять с паузы машины</div>
<div id="t160" class="t" style="left:1696.09px;top:526px;font-size:13.5px;color:#d9534f;font-weight:400;letter-spacing:0.257px;">Удалить машины</div>
<svg class="b" style="left:0;top:0" width="1905" height="719">
<ellipse cx="274" cy="382.5" rx="19" ry="87" fill="none" stroke="#ff0000" stroke-width="4.2"/>
<path d="M1852 82V160" stroke="#ff0000" stroke-width="4"/>
<path d="M1847.5 158.5H1856.5L1852 172Z" fill="#ff0000"/>
</svg>
</body></html>
